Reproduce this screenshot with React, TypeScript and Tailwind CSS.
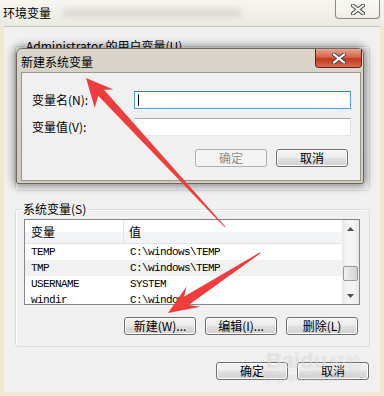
import React from 'react';

// Win7 "环境变量" dialog with the "新建系统变量" child window on top
const cjk = "font-['Noto_Sans_CJK_SC',sans-serif]";

const Btn: React.FC<{ children: React.ReactNode; disabled?: boolean }> = ({ children, disabled }) => (
  <div
    className={
      disabled
        ? 'h-[18px] w-[72px] rounded-[3px] border border-[#adb2b5] bg-[#f4f4f4] text-[#8d8d8d] flex items-center justify-center text-[12px] leading-none'
        : 'h-[18px] w-[72px] rounded-[3px] border border-[#707070] bg-[linear-gradient(#f3f3f3,#ececec_45%,#dedede_55%,#d2d2d2)] text-black flex items-center justify-center text-[12px] leading-none shadow-[inset_0_0_0_1px_#fcfcfc]'
    }
  >
    {children}
  </div>
);

const rows = [
  { name: 'TEMP', value: 'C:\\windows\\TEMP' },
  { name: 'TMP', value: 'C:\\windows\\TEMP', hl: true },
  { name: 'USERNAME', value: 'SYSTEM' },
  { name: 'windir', value: 'C:\\windows' },
];

const CloseX: React.FC<{ color: string }> = ({ color }) => (
  <svg width="14" height="11" viewBox="0 0 14 11">
    <path d="M2 1.5 L12 9.5 M12 1.5 L2 9.5" stroke="#4a4a4a" strokeWidth="4" strokeLinecap="round" />
    <path d="M2 1.5 L12 9.5 M12 1.5 L2 9.5" stroke={color} strokeWidth="2.2" strokeLinecap="round" />
  </svg>
);

export default function App() {
  return (
    <div className={`relative w-[384px] h-[396px] overflow-hidden bg-[#efe9d4] flex flex-col ${cjk}`}>
      {/* outer title bar */}
      <div className="relative h-[26px] shrink-0 bg-[linear-gradient(#f5f4ee,#ecebe3)] flex items-start">
        <span className="mt-[5px] ml-[3px] text-[12px] leading-[16px] text-black">环境变量</span>
        <div className="absolute left-[62px] top-[9px] w-[180px] h-[8px] rounded-full bg-[#b9b6ad] opacity-40 blur-[3px]" />
        <div className="absolute right-[4px] top-0 w-[45px] h-[19px] rounded-b-[4px] border border-t-0 border-[#8d8b84] bg-[linear-gradient(#fbfbf6,#eeede4)] flex items-center justify-center">
          <CloseX color="#f4f4f4" />
        </div>
      </div>

      {/* client area */}
      <div className="flex-1 mx-[4px] mb-[4px] bg-[#f0f0f0] border-t border-[#c9c6bb] flex flex-col">
        <fieldset className="mt-[13px] ml-[11px] mr-[10px] h-[151px] border border-[#d5dfe5] rounded-[3px] shadow-[inset_1px_1px_0_#fff]">
          <legend className="ml-[8px] px-[2px] text-[12px] leading-[12px]">Administrator 的用户变量(U)</legend>
        </fieldset>

        <fieldset className="mt-[12px] ml-[11px] mr-[10px] h-[144px] border border-[#d5dfe5] rounded-[3px] shadow-[inset_1px_1px_0_#fff] flex flex-col">
          <legend className="ml-[5px] px-[2px] text-[12px] leading-[12px]">系统变量(S)</legend>
          {/* list view */}
          <div className="mt-[4px] ml-[8px] w-[336px] h-[86px] border border-[#828790] bg-white flex">
            <div className="flex-1 flex flex-col overflow-hidden">
              <div className="h-[24px] shrink-0 flex bg-[linear-gradient(#ffffff_50%,#f3f4f6_50%)] border-b border-[#e5e5e5] text-[12px]">
                <div className="w-[99px] border-r border-[#e3e4e6] pl-[6px] flex items-center">变量</div>
                <div className="pl-[5px] flex items-center">值</div>
              </div>
              {rows.map((r) => (
                <div
                  key={r.name}
                  className={`h-[16px] shrink-0 flex items-center font-['Liberation_Mono',monospace] text-[11px] tracking-[-0.6px] ${r.hl ? 'bg-[#f1f1f1]' : ''}`}
                >
                  <span className="w-[100px] pl-[6px]">{r.name}</span>
                  <span className="pl-[5px]">{r.value}</span>
                </div>
              ))}
            </div>
            {/* scrollbar */}
            <div className="w-[17px] shrink-0 bg-[linear-gradient(90deg,#e8e8e8,#f4f4f4_30%,#f4f4f4_70%,#e8e8e8)] flex flex-col items-center">
              <div className="h-[17px] flex items-center justify-center">
                <svg width="7" height="4" viewBox="0 0 7 4"><path d="M0 4 L3.5 0 L7 4 Z" fill="#505050" /></svg>
              </div>
              <div className="mt-[29px] w-[15px] h-[15px] rounded-[2px] border border-[#9a9a9a] bg-[linear-gradient(90deg,#f1f1f1,#e1e1e1_50%,#d4d4d4)]" />
              <div className="mt-auto h-[17px] flex items-center justify-center">
                <svg width="7" height="4" viewBox="0 0 7 4"><path d="M0 0 L7 0 L3.5 4 Z" fill="#505050" /></svg>
              </div>
            </div>
          </div>
          <div className="mt-[12px] mr-[11px] flex justify-end gap-[9px]">
            <Btn>新建(W)...</Btn>
            <Btn>编辑(I)...</Btn>
            <Btn>删除(L)</Btn>
          </div>
        </fieldset>

        <div className="mt-[15px] mr-[11px] flex justify-end gap-[9px]">
          <Btn>确定</Btn>
          <Btn>取消</Btn>
        </div>
      </div>

      {/* Baidu watermark, faint */}
      <div className="absolute left-[266px] top-[350px] pointer-events-none select-none flex flex-col items-start text-white/45 [text-shadow:0_0_1px_rgba(0,0,0,0.15)]">
        <div className="flex items-end gap-[2px]">
          <span className="font-['Liberation_Sans',sans-serif] text-[22px] font-bold leading-[22px]">Baidu</span>
          <span className="text-[16px] leading-[20px]">经验</span>
        </div>
        <span className="font-['Liberation_Sans',sans-serif] text-[10px] leading-[12px]">jingyan.baidu.com</span>
      </div>

      {/* child dialog: 新建系统变量 */}
      <div className="absolute left-[16px] top-[48px] w-[348px] h-[136px] rounded-t-[6px] rounded-b-[2px] border border-[#6d6a62] bg-[linear-gradient(#d9d5ca,#cfcabd)] shadow-[0_0_8px_2px_rgba(0,0,0,0.45)] flex flex-col pl-[4px] pr-[2px] pb-[2px]">
        <div className="h-[23px] shrink-0 flex items-start">
          <span className="mt-[6px] text-[12px] leading-[14px] text-black">新建系统变量</span>
        </div>
        <div className="absolute right-[1px] top-0 w-[47px] h-[19px] rounded-b-[4px] border border-t-0 border-[#5a2a22] bg-[linear-gradient(#e9a590,#d6624a_45%,#c0391f_55%,#d9694e)] flex items-center justify-center">
          <CloseX color="#ffffff" />
        </div>
        <div className="flex-1 border border-[#9b978d] bg-[#f0f0f0] pt-[18px] pl-[10px] pr-[9px] flex flex-col">
          <div className="h-[18px] flex items-center">
            <span className="w-[102px] text-[12px] leading-none">变量名(N):</span>
            <div className="w-[218px] h-[18px] border border-[#569de5] border-t-[#3d7bad] bg-white flex items-center pl-[3px]">
              <div className="w-px h-[12px] bg-black" />
            </div>
          </div>
          <div className="mt-[9px] h-[18px] flex items-center">
            <span className="w-[102px] text-[12px] leading-none">变量值(V):</span>
            <div className="w-[218px] h-[18px] border border-[#abadb3] border-l-[#e2e3ea] border-r-[#dbdfe6] border-b-[#e3e9ef] bg-white" />
          </div>
          <div className="mt-[13px] flex justify-end gap-[9px] pr-[3px]">
            <Btn disabled>确定</Btn>
            <Btn>取消</Btn>
          </div>
        </div>
      </div>

      {/* red annotation arrows */}
      <svg className="absolute inset-0 pointer-events-none" width="384" height="396" viewBox="0 0 384 396">
        <polygon
          points="86,78 113.5,89.4 104,89.8 225.4,226.7 224.6,227.3 98.2,95.7 94.7,107.8"
          fill="#ef3d3d"
        />
        <polygon
          points="168,313 186.5,286.5 184.2,296.6 259.7,252.6 260.3,253.4 188.6,305 200.5,306.7"
          fill="#ef3d3d"
        />
      </svg>
    </div>
  );
}
